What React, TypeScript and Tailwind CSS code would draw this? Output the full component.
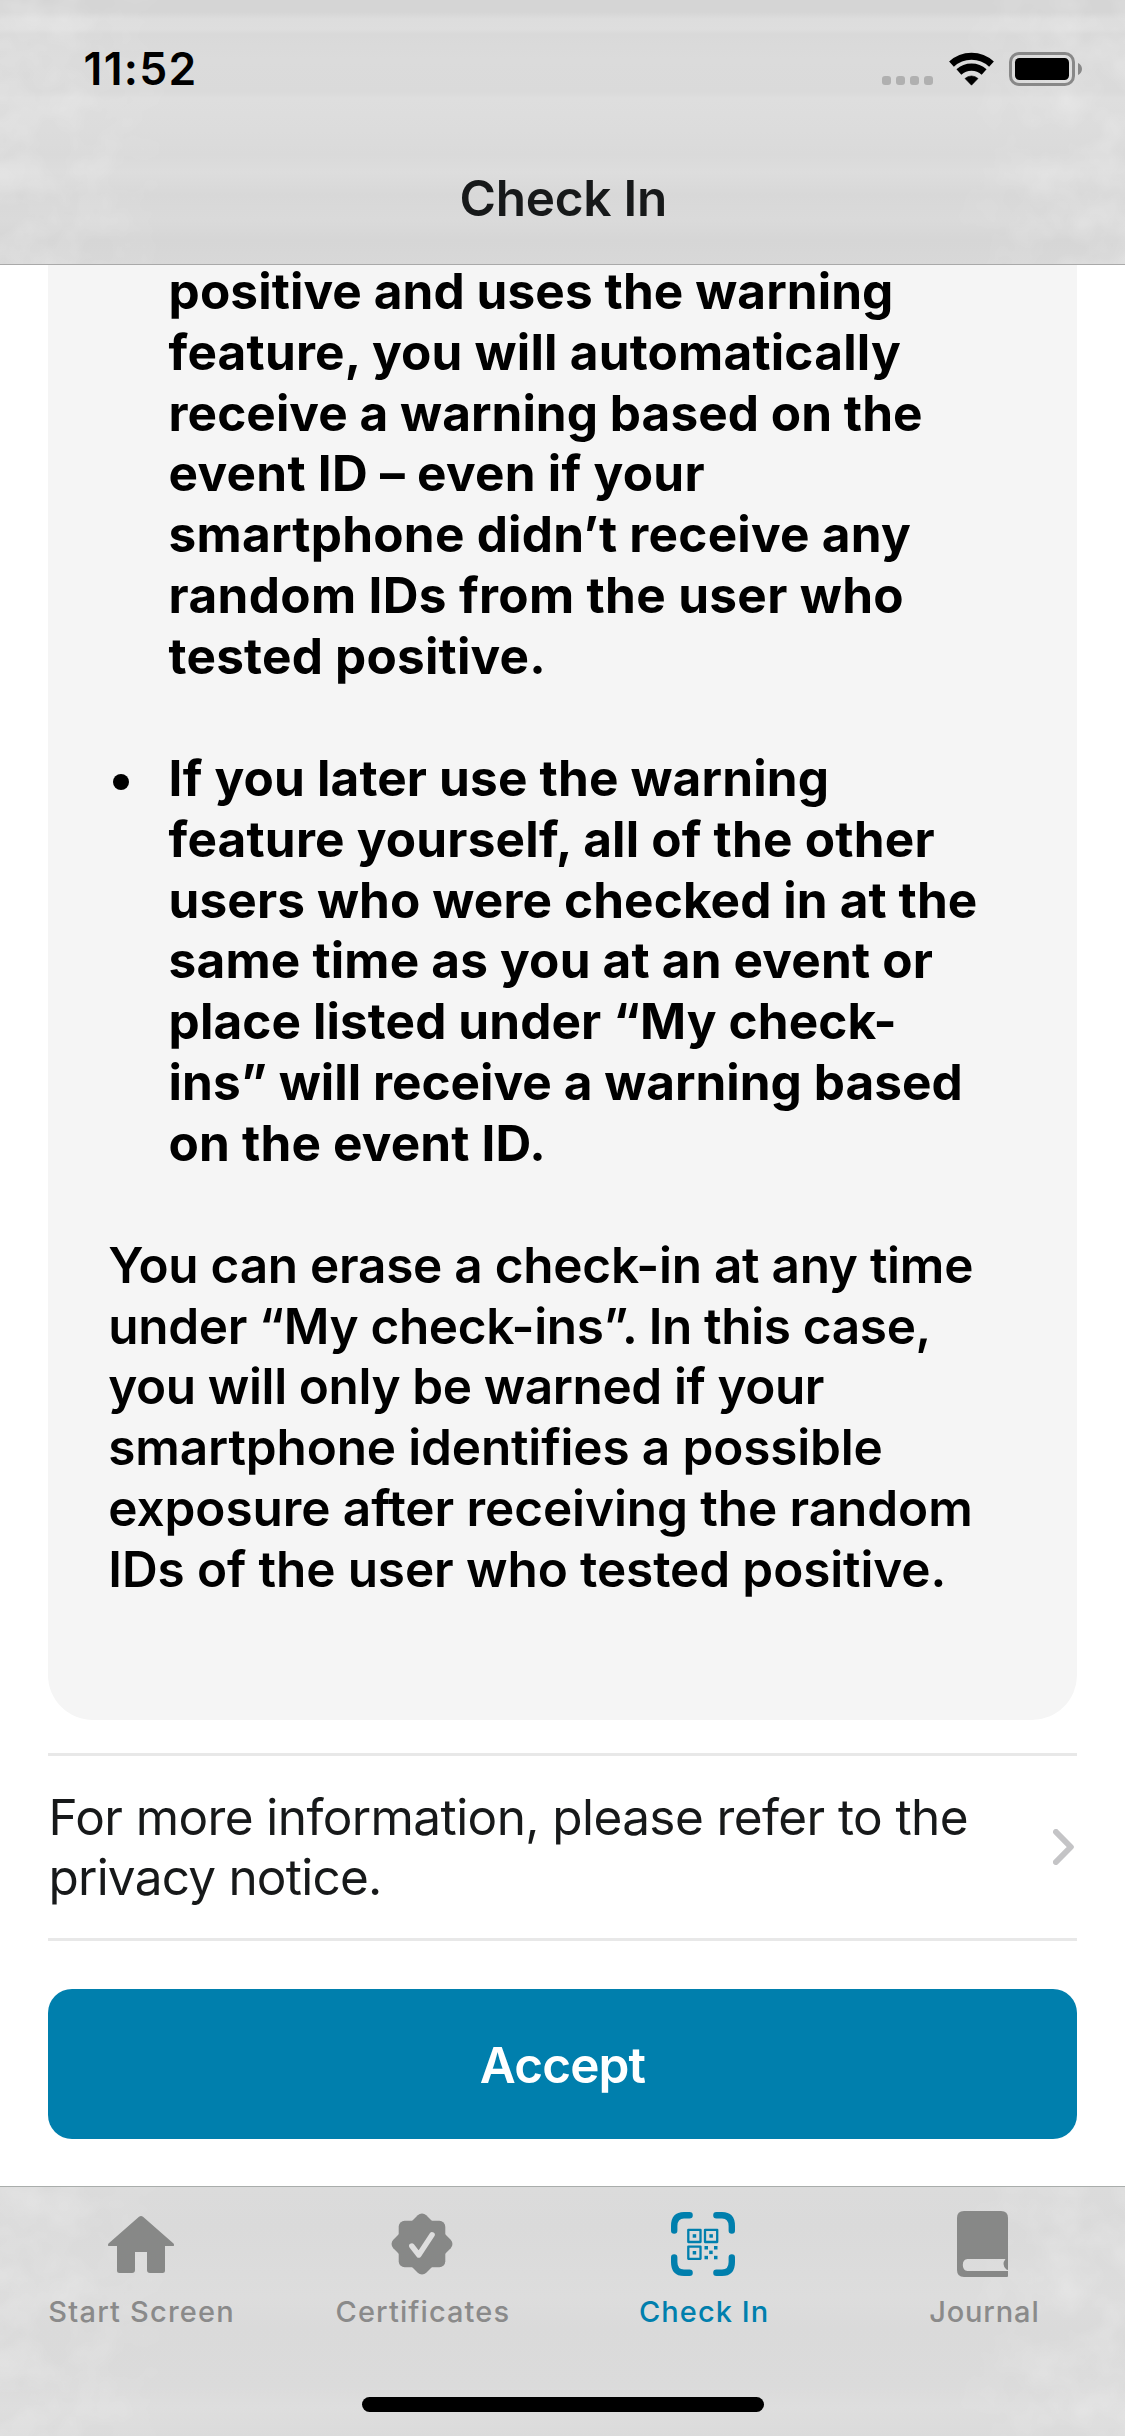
import type { ReactNode } from "react";

type Line = { text: string; tracking: string };

const warningLines: Line[] = [
  { text: "positive and uses the warning", tracking: "tracking-[0.1px]" },
  { text: "feature, you will automatically", tracking: "tracking-[0.21px]" },
  { text: "receive a warning based on the", tracking: "tracking-[0.06px]" },
  { text: "event ID – even if your", tracking: "tracking-[0.28px]" },
  { text: "smartphone didn’t receive any", tracking: "tracking-[0.25px]" },
  { text: "random IDs from the user who", tracking: "tracking-[0.34px]" },
  { text: "tested positive.", tracking: "tracking-[0.22px]" },
];

const featureLines: Line[] = [
  { text: "If you later use the warning", tracking: "tracking-[0.17px]" },
  { text: "feature yourself, all of the other", tracking: "tracking-[0.2px]" },
  { text: "users who were checked in at the", tracking: "tracking-[0.11px]" },
  { text: "same time as you at an event or", tracking: "tracking-[0.19px]" },
  { text: "place listed under “My check-", tracking: "tracking-[0.11px]" },
  { text: "ins” will receive a warning based", tracking: "tracking-[0.03px]" },
  { text: "on the event ID.", tracking: "tracking-[0.17px]" },
];

const eraseLines: Line[] = [
  { text: "You can erase a check-in at any time", tracking: "tracking-[-0.26px]" },
  { text: "under “My check-ins”. In this case,", tracking: "tracking-[-0.35px]" },
  { text: "you will only be warned if your", tracking: "tracking-[-0.39px]" },
  { text: "smartphone identifies a possible", tracking: "tracking-[-0.15px]" },
  { text: "exposure after receiving the random", tracking: "tracking-[-0.08px]" },
  { text: "IDs of the user who tested positive.", tracking: "tracking-[-0.11px]" },
];

function Lines({ lines }: { lines: Line[] }) {
  return (
    <>
      {lines.map((line) => (
        <span key={line.text} className={`block whitespace-nowrap ${line.tracking}`}>
          {line.text}
        </span>
      ))}
    </>
  );
}

/* Faint mottling at both ends of the translucent bars. */
function BarTexture({ id, height }: { id: string; height: number }) {
  return (
    <svg
      className="pointer-events-none absolute inset-0 h-full w-full"
      viewBox={`0 0 1125 ${height}`}
      preserveAspectRatio="none"
      aria-hidden="true"
    >
      <defs>
        <filter id={`${id}-noise`} x="0" y="0" width="100%" height="100%">
          <feTurbulence type="fractalNoise" baseFrequency="0.025" numOctaves="3" seed="8" />
          <feColorMatrix values="0 0 0 0 1  0 0 0 0 1  0 0 0 0 1  1.6 0 0 0 -0.5" />
        </filter>
        <linearGradient id={`${id}-fade`}>
          <stop offset="0" stopColor="#fff" />
          <stop offset="0.08" stopColor="#fff" stopOpacity="0.8" />
          <stop offset="0.16" stopColor="#fff" stopOpacity="0" />
          <stop offset="0.84" stopColor="#fff" stopOpacity="0" />
          <stop offset="0.92" stopColor="#fff" stopOpacity="0.8" />
          <stop offset="1" stopColor="#fff" />
        </linearGradient>
        <mask id={`${id}-mask`}>
          <rect width="1125" height={height} fill={`url(#${id}-fade)`} />
        </mask>
      </defs>
      <g mask={`url(#${id}-mask)`}>
        <rect width="1125" height={height} filter={`url(#${id}-noise)`} opacity="0.27" />
      </g>
    </svg>
  );
}

function SignalDots() {
  return (
    <svg width="51" height="34" viewBox="0 0 51 34" fill="#b0b0b0">
      <rect x="0" y="24" width="9" height="9" rx="3" />
      <rect x="14" y="24" width="9" height="9" rx="3" />
      <rect x="28" y="24" width="9" height="9" rx="3" />
      <rect x="42" y="24" width="9" height="9" rx="3" />
    </svg>
  );
}

function WifiIcon() {
  return (
    <svg width="45" height="34" viewBox="0 0 45 34" fill="none" stroke="#000">
      <path d="M2.5 12.1A29.3 29.3 0 0 1 42.5 12.1" strokeWidth="7" />
      <path d="M9.9 20A18.5 18.5 0 0 1 35.1 20" strokeWidth="7.2" />
      <path d="M22.5 33.2L16 26.5A9.6 9.6 0 0 1 29 26.5Z" fill="#000" stroke="#000" strokeWidth="0.6" strokeLinejoin="round" />
    </svg>
  );
}

function BatteryIcon() {
  return (
    <svg width="73" height="34" viewBox="0 0 73 34">
      <rect x="1.5" y="1.5" width="63" height="31" rx="8.5" fill="none" stroke="#888" strokeWidth="3" />
      <rect x="6" y="6" width="54" height="22" rx="4.5" fill="#000" />
      <path d="M69 11c2.5 1.2 4 3.5 4 6s-1.5 4.800-4 6z" fill="#888" />
    </svg>
  );
}

function HomeIcon() {
  return (
    <svg width="66" height="57" viewBox="0 0 66 57" fill="#878887">
      <path d="M31 .8Q33-.8 35 .8L65.5 27.600Q67 30 64.5 30H57V54.5Q57 57 54.5 57H42Q39 57 39 54V36H27V54Q27 57 24 57H11.5Q9 57 9 54.5V30H1.5Q-1 30 .5 27.600Z" />
    </svg>
  );
}

function CertificateIcon() {
  return (
    <svg width="62" height="62" viewBox="-31 -31 62 62" fill="#878887">
      <rect x="-23.3" y="-23.3" width="46.6" height="46.6" rx="6" />
      <rect x="-23.3" y="-23.3" width="46.6" height="46.6" rx="6" transform="rotate(45)" />
      <path d="M-10.2 2L-3.2 11L10.1-9.2" fill="none" stroke="#dedede" strokeWidth="5.4" strokeLinecap="round" strokeLinejoin="round" />
    </svg>
  );
}

function ScanIcon() {
  return (
    <svg width="64" height="64" viewBox="0 0 64 64" fill="#007fad">
      <g fill="none" stroke="#007fad" strokeWidth="6.4" strokeLinecap="round">
        <path d="M3.2 18.6V14Q3.2 3.2 13 3.2H18.6" />
        <path d="M45.4 3.2H51Q60.8 3.2 60.8 14V18.6" />
        <path d="M60.8 45.4V50Q60.8 60.8 51 60.8H45.4" />
        <path d="M18.6 60.8H13Q3.2 60.8 3.2 50V45.4" />
      </g>
      <g fill="none" stroke="#007fad" strokeWidth="2.3" strokeLinejoin="round">
        <rect x="17.3" y="17.8" width="12.2" height="12.2" />
        <rect x="34" y="17.8" width="12.2" height="12.2" />
        <rect x="17.3" y="34.6" width="12.2" height="12.2" />
      </g>
      <rect x="21.7" y="22.2" width="3.5" height="3.5" />
      <rect x="38.4" y="22.2" width="3.5" height="3.5" />
      <rect x="21.7" y="39" width="3.5" height="3.5" />
      <rect x="33.5" y="34" width="3.5" height="3.5" />
      <rect x="43" y="34" width="3.5" height="3.5" />
      <rect x="38.2" y="38.6" width="3.5" height="3.5" />
      <rect x="33.5" y="43.8" width="3.5" height="3.5" />
      <rect x="43" y="43.8" width="3.5" height="3.5" />
    </svg>
  );
}

function JournalIcon() {
  return (
    <svg className="mr-[3px]" width="51" height="66" viewBox="0 0 51 66" fill="#878887">
      <path
        fillRule="evenodd"
        d="M7 0H44Q51 0 51 7V59Q50.2 59 49.4 58.6Q44 53.5 48.5 48H10.5Q5.8 48.5 5.8 54T10.5 60H51V65Q51 66 50 66H7Q0 66 0 59V7Q0 0 7 0Z"
      />
    </svg>
  );
}

function Tab({ label, tracking, active, children }: { label: string; tracking: string; active?: boolean; children: ReactNode }) {
  return (
    <button className="flex flex-col items-center">
      <span className="flex h-[107px] items-center justify-center pt-[7px]">{children}</span>
      <span
        className={`text-[29px] leading-[35px] font-medium whitespace-nowrap ${tracking} ${active ? "text-[#007fad]" : "text-[#8a8a8a]"}`}
      >
        {label}
      </span>
    </button>
  );
}

export default function App() {
  return (
    <div className="flex h-[2436px] w-[1125px] flex-col overflow-hidden bg-white font-[Inter,sans-serif] text-black">
      <header className="relative z-10 h-[265px] shrink-0 border-b border-[#a9a9a9] bg-[linear-gradient(180deg,#d5d5d5_0px,#d5d5d5_12px,#dddddd_19px,#dedede_29px,#d9d9d9_34px,#dbdbdb_60px,#dadada_92px,#dedede_98px,#dcdcdc_130px,#dadada_155px,#dddddd_172px,#d8d8d8_195px,#dadada_220px,#d6d6d6_240px,#d8d8d8_264px)]">
        <BarTexture id="top" height={264} />
        <div className="relative flex h-[132px] items-start justify-between pt-[42px] pr-[43px] pl-[83.6px]">
          <span className="text-[44.5px] leading-[54px] font-semibold tracking-[1.3px]">11:52</span>
          <div className="flex h-[54px] items-center">
            <SignalDots />
            <div className="w-[15.5px]" />
            <WifiIcon />
            <div className="w-[15.5px]" />
            <BatteryIcon />
          </div>
        </div>
        <h1 className="relative pt-[36px] pl-[1.5px] text-center text-[49.5px] leading-[60px] font-semibold tracking-[-0.24px] text-[#17191a]">
          Check In
        </h1>
      </header>

      <main className="flex grow flex-col px-12">
        <section className="h-[1455px] shrink-0 rounded-b-[45px] bg-[#f5f5f5] px-[60px] text-[49.5px] leading-[60.86px]">
          <ul className="-mt-[4.1px] flex flex-col gap-[60.86px] font-bold">
            <li className="pl-[60.6px]">
              <Lines lines={warningLines} />
            </li>
            <li className="flex">
              <span className="flex h-[60.86px] w-[60.6px] shrink-0 items-center pt-[8px] pl-[4.5px]">
                <span className="size-[16.5px] rounded-full bg-black" />
              </span>
              <div>
                <Lines lines={featureLines} />
              </div>
            </li>
          </ul>
          <p className="mt-[60.86px] pl-[0.3px] font-semibold">
            <Lines lines={eraseLines} />
          </p>
        </section>

        <a className="mt-[33px] flex h-[188px] shrink-0 items-center justify-between border-y-[3px] border-[#e8e8e8] pr-[3px] pl-[0.5px] text-[49.5px] leading-[60px] text-[#17191a]">
          <span>
            <span className="block tracking-[-0.59px] whitespace-nowrap">For more information, please refer to the</span>
            <span className="block tracking-[-0.78px] whitespace-nowrap">privacy notice.</span>
          </span>
          <svg width="21" height="36" viewBox="0 0 21 36" fill="none" stroke="#c4c4c6" strokeWidth="6" strokeLinecap="round" strokeLinejoin="round">
            <path d="M3 3L17.8 18L3 33" />
          </svg>
        </a>

        <button className="mt-[48px] h-[150px] shrink-0 rounded-[24px] bg-[#007fad] pt-[2px] text-[49.5px] leading-[60px] font-semibold tracking-[-0.87px] text-white">
          Accept
        </button>
      </main>

      <footer className="relative h-[250px] shrink-0 border-t border-[#a9adab] bg-[linear-gradient(180deg,#dbdbdb_0px,#dadada_40px,#dddddd_110px,#dadada_140px,#dbdbdb_200px,#dedede_220px,#dbdbdb_249px)]">
        <BarTexture id="bottom" height={249} />
        <nav className="relative grid grid-cols-4">
          <Tab label="Start Screen" tracking="tracking-[1.2px] pl-[2px]">
            <HomeIcon />
          </Tab>
          <Tab label="Certificates" tracking="tracking-[1.1px] pl-[2px]">
            <CertificateIcon />
          </Tab>
          <Tab label="Check In" tracking="tracking-[1.04px] pl-[2px]" active>
            <ScanIcon />
          </Tab>
          <Tab label="Journal" tracking="tracking-[0.85px]">
            <JournalIcon />
          </Tab>
        </nav>
        <div className="relative mx-auto mt-[68px] h-[15px] w-[402px] rounded-full bg-black" />
      </footer>
    </div>
  );
}
